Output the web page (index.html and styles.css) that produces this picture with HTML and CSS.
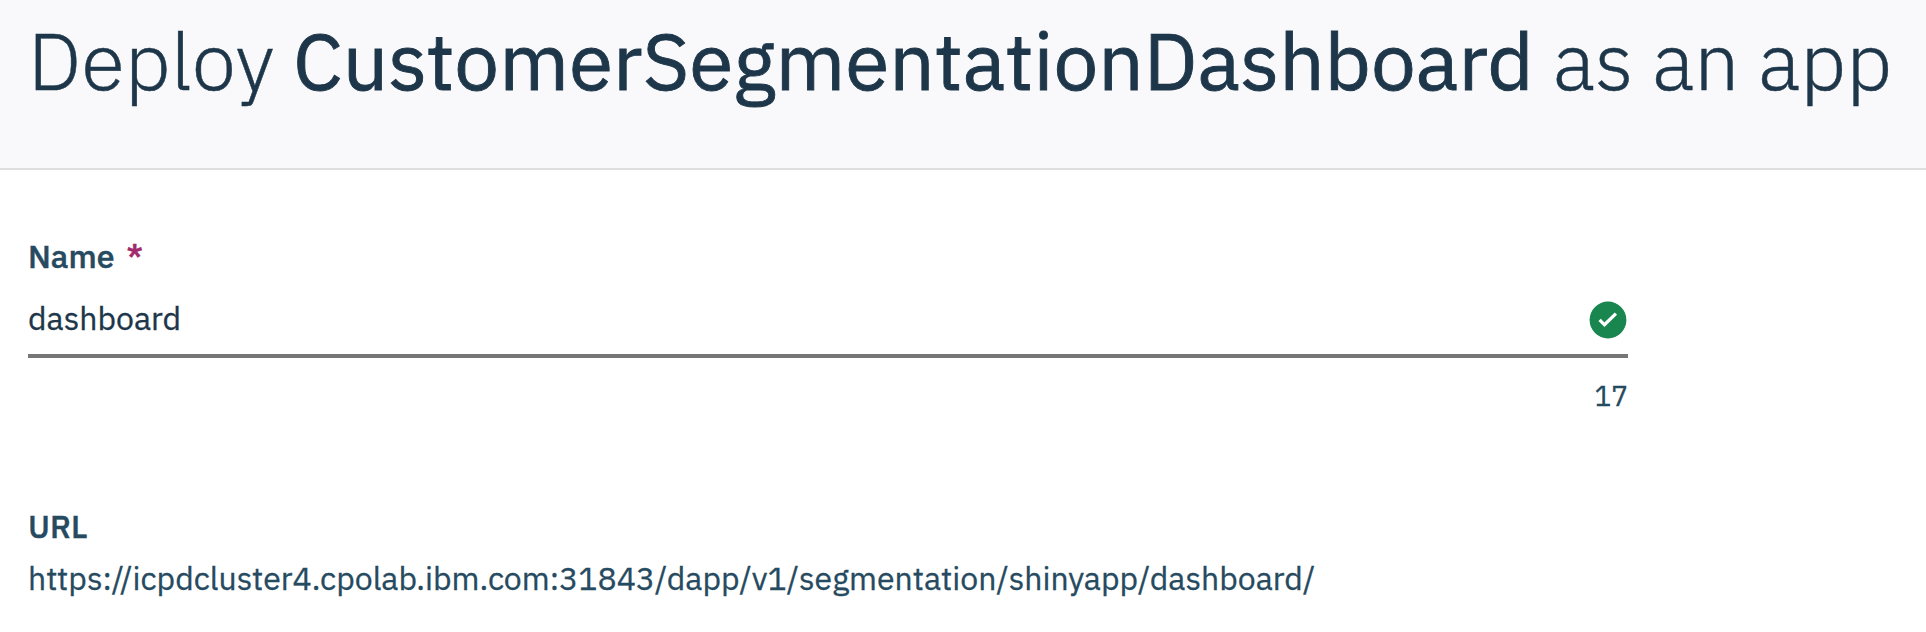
FILE: index.html
```html
<!DOCTYPE html>
<html lang="en">
<head>
<meta charset="utf-8">
<title>Deploy as an app</title>
<link rel="stylesheet" href="styles.css">
</head>
<body>
<header class="page-header">
  <h1 class="page-title">Deploy <strong class="asset-name">CustomerSegmentationDashboard</strong> as an app</h1>
</header>
<main class="form">
  <div class="field">
    <label class="label" for="name">Name<span class="required">*</span></label>
    <div class="input-row">
      <input class="input" id="name" type="text" value="dashboard">
      <svg class="valid-icon" viewBox="0 0 38 38" aria-hidden="true">
        <circle cx="19" cy="19" r="18.4" fill="#198650"/>
        <path d="M10.6 18.9l4.9 4.9L26.9 12.6" fill="none" stroke="#fff" stroke-width="3.3"/>
      </svg>
    </div>
    <div class="counter">17</div>
  </div>
  <div class="field">
    <div class="label">URL</div>
    <div class="url">https://icpdcluster4.cpolab.ibm.com:31843/dapp/v1/segmentation/shinyapp/dashboard/</div>
  </div>
</main>
</body>
</html>
```
FILE: styles.css
```css
* { box-sizing: border-box; }
body {
  margin: 0;
  background: #fff;
  color: #264a60;
  font-family: "IBM Plex Sans", "Open Sans", sans-serif;
  font-size: 32px;
  line-height: 40px;
  -webkit-text-stroke: 0.3px currentColor;
}
.page-header {
  height: 170px;
  padding: 8px 28px 0;
  background: #f9f9fb;
  border-bottom: 2px solid #dfdfe1;
}
.page-title {
  margin: 0;
  color: #1d3649;
  font-size: 80px;
  font-weight: 300;
  line-height: 104px;
  white-space: nowrap;
  -webkit-text-stroke: 0.5px currentColor;
}
.asset-name {
  font-weight: 400;
  -webkit-text-stroke: 0.9px currentColor;
}
.form {
  display: flex;
  flex-direction: column;
  gap: 92px;
  width: 1628px;
  padding: 66px 0 0 28px;
}
.label {
  display: flex;
  gap: 12px;
  font-weight: 500;
  -webkit-text-stroke: 0.5px currentColor;
}
.required { color: #a2296b; }
.input-row {
  display: flex;
  align-items: flex-start;
  height: 78px;
  margin-top: 4px;
  padding: 18px 0 0;
  border-bottom: 4px solid #777677;
}
.input {
  flex: 1;
  height: 40px;
  padding: 0;
  border: 0;
  outline: 0;
  background: transparent;
  color: #1d3649;
  font: inherit;
}
.valid-icon {
  width: 38px;
  height: 38px;
  margin: 3px 1px 0 0;
}
.counter {
  margin-top: 20px;
  font-size: 28px;
  line-height: 36px;
  text-align: right;
}
.url { margin-top: 12px; white-space: nowrap; }
```
